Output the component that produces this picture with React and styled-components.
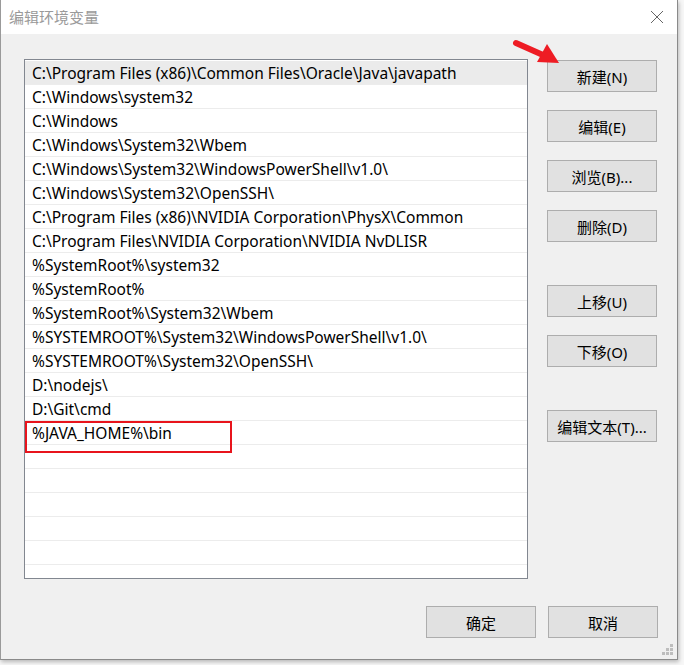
import React from "react";
import styled, { createGlobalStyle } from "styled-components";

const GlobalStyle = createGlobalStyle`
  html, body {
    margin: 0;
    padding: 0;
    background: #f4f4f4;
    font-family: "Noto Sans", "Noto Sans CJK SC", sans-serif;
  }
`;

const Page = styled.div`
  width: 684px;
  height: 665px;
  display: flex;
  overflow: hidden;
  background: #f7f7f7;
`;

const Window = styled.div`
  width: 676px;
  height: 659px;
  flex: none;
  display: flex;
  flex-direction: column;
  background: #f0f0f0;
  border-left: 1px solid #9a9a9a;
  border-right: 1px solid #8a8a8a;
  border-bottom: 1px solid #8a8a8a;
  box-shadow: 1px 2px 4px rgba(0, 0, 0, 0.25);
  position: relative;
`;

const TitleBar = styled.div`
  height: 34px;
  background: #fff;
  display: flex;
  align-items: center;
  justify-content: space-between;
  padding: 0 13px 0 8px;
`;

const Title = styled.span`
  font-family: "Noto Sans CJK SC", sans-serif;
  font-size: 15px;
  color: #9a9a9a;
  margin-top: -2px;
`;

const Body = styled.div`
  flex: 1;
  display: flex;
  flex-direction: column;
  padding: 25px 19px 21px 23px;
`;

const Main = styled.div`
  display: flex;
  gap: 19px;
`;

const ListBox = styled.div`
  width: 502px;
  height: 517px;
  border: 1px solid #828790;
  background: #fff;
  padding-top: 1px;
  box-sizing: content-box;
  overflow: hidden;
  position: relative;
`;

const Row = styled.div`
  height: 23px;
  border-bottom: 1px solid #ececec;
  background: ${(p) => (p.$selected ? "#ebebeb" : "#fff")};
  display: flex;
  align-items: center;
  padding-left: 7px;
  font-family: "Noto Sans", sans-serif;
  font-size: 15.5px;
  color: #000;
  white-space: nowrap;
`;

const Highlight = styled.div`
  position: absolute;
  left: 0;
  top: 361px;
  width: 203px;
  height: 28px;
  border: 2px solid #e8141c;
`;

const Side = styled.div`
  display: flex;
  flex-direction: column;
  gap: 18px;
  padding-top: 1px;
`;

const Group = styled.div`
  display: flex;
  flex-direction: column;
  gap: 18px;
  margin-top: ${(p) => p.$gap || 0}px;
`;

const Button = styled.button`
  width: 110px;
  height: 32px;
  box-sizing: border-box;
  border: 1px solid #adadad;
  background: #e1e1e1;
  font-family: "Noto Sans", "Noto Sans CJK SC", sans-serif;
  font-size: 15px;
  color: #000;
  padding: 0;
  display: flex;
  align-items: center;
  justify-content: center;
`;

const Footer = styled.div`
  margin-top: auto;
  display: flex;
  justify-content: flex-end;
  gap: 12px;
`;

const Arrow = styled.svg`
  position: absolute;
  left: 510px;
  top: 36px;
`;

const Grip = styled.svg`
  position: absolute;
  right: 3px;
  bottom: 3px;
`;

const paths = [
  "C:\\Program Files (x86)\\Common Files\\Oracle\\Java\\javapath",
  "C:\\Windows\\system32",
  "C:\\Windows",
  "C:\\Windows\\System32\\Wbem",
  "C:\\Windows\\System32\\WindowsPowerShell\\v1.0\\",
  "C:\\Windows\\System32\\OpenSSH\\",
  "C:\\Program Files (x86)\\NVIDIA Corporation\\PhysX\\Common",
  "C:\\Program Files\\NVIDIA Corporation\\NVIDIA NvDLISR",
  "%SystemRoot%\\system32",
  "%SystemRoot%",
  "%SystemRoot%\\System32\\Wbem",
  "%SYSTEMROOT%\\System32\\WindowsPowerShell\\v1.0\\",
  "%SYSTEMROOT%\\System32\\OpenSSH\\",
  "D:\\nodejs\\",
  "D:\\Git\\cmd",
  "%JAVA_HOME%\\bin",
];

const rows = [...paths, ...Array(7).fill("")];

const App = () => (
  <>
    <GlobalStyle />
    <Page>
      <Window>
        <TitleBar>
          <Title>编辑环境变量</Title>
          <svg width="14" height="14" viewBox="0 0 14 14">
            <path d="M1 1L13 13M13 1L1 13" stroke="#666" strokeWidth="1" />
          </svg>
        </TitleBar>
        <Body>
          <Main>
            <ListBox>
              {rows.map((r, i) => (
                <Row key={i} $selected={i === 0}>
                  {r}
                </Row>
              ))}
              <Highlight />
            </ListBox>
            <Side>
              <Group>
                <Button>新建(N)</Button>
                <Button>编辑(E)</Button>
                <Button>浏览(B)...</Button>
                <Button>删除(D)</Button>
              </Group>
              <Group $gap={25}>
                <Button>上移(U)</Button>
                <Button>下移(O)</Button>
              </Group>
              <Group $gap={25}>
                <Button>编辑文本(T)...</Button>
              </Group>
            </Side>
          </Main>
          <Footer>
            <Button>确定</Button>
            <Button>取消</Button>
          </Footer>
        </Body>
        <Arrow width="50" height="30" viewBox="0 0 50 30">
          <path d="M5 7L32 19" stroke="#ee1c24" strokeWidth="6" strokeLinecap="round" />
          <path d="M26 26L36 8L48 27Z" fill="#ee1c24" />
        </Arrow>
        <Grip width="12" height="12" viewBox="0 0 12 12">
          <g fill="#bdbdbd">
            <rect x="8" y="0" width="3" height="3" />
            <rect x="4" y="4" width="3" height="3" />
            <rect x="8" y="4" width="3" height="3" />
            <rect x="0" y="8" width="3" height="3" />
            <rect x="4" y="8" width="3" height="3" />
            <rect x="8" y="8" width="3" height="3" />
          </g>
        </Grip>
      </Window>
    </Page>
  </>
);

export default App;
